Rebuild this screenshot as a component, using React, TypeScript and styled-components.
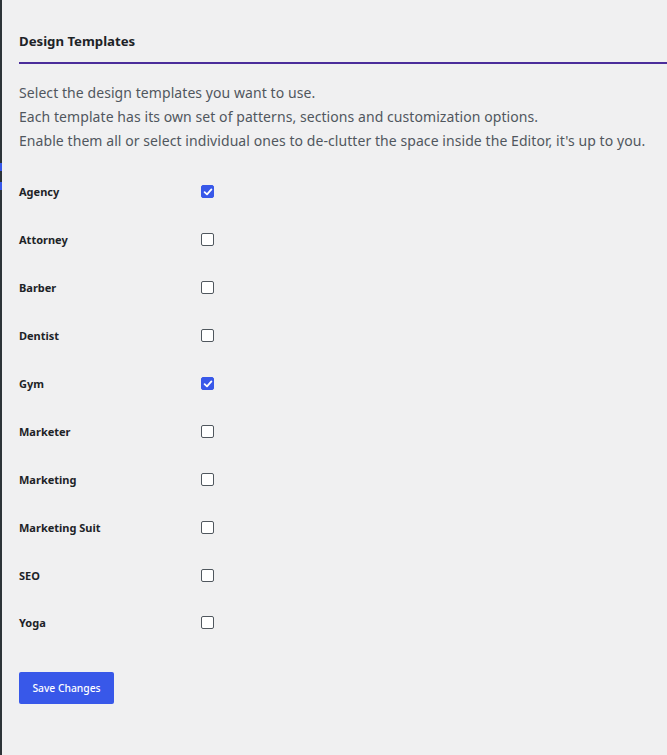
import React, { useState } from "react";
import styled, { createGlobalStyle } from "styled-components";

const Global = createGlobalStyle`
  html, body { margin: 0; padding: 0; background: #f0f0f1; }
  body { font-family: "Noto Sans", "Open Sans", sans-serif; color: #1d2327; }
`;

const Page = styled.div`
  position: relative;
  min-height: 755px;
  box-sizing: border-box;
  border-left: 2px solid #2c3338;
  padding: 0 0 40px 17px;
`;

const MenuMark = styled.span<{ $top: number }>`
  position: absolute;
  left: -2px;
  top: ${(p) => p.$top}px;
  width: 2px;
  height: 8px;
  background: #3858e9;
`;

const Header = styled.div`
  padding-top: 32px;
  height: 30px;
  border-bottom: 2px solid #4b2d9b;
`;

const Title = styled.h2`
  margin: 0;
  font-size: 13.2px;
  line-height: 18px;
  font-weight: 700;
  color: #1d2327;
`;

const Description = styled.div`
  margin-top: 17px;
  font-size: 14px;
  line-height: 24px;
  color: #50575e;
  letter-spacing: 0.07px;
  white-space: nowrap;
`;

const List = styled.div`
  margin-top: 15px;
  display: flex;
  flex-direction: column;
`;

const Row = styled.label`
  display: grid;
  grid-template-columns: 182px 13px;
  align-items: center;
  height: 47.9px;
  cursor: pointer;
`;

const Label = styled.span`
  font-size: 11px;
  font-weight: 700;
  color: #1d2327;
`;

const Box = styled.span<{ $checked: boolean }>`
  width: 13px;
  height: 13px;
  box-sizing: border-box;
  border-radius: 2px;
  border: 1px solid ${(p) => (p.$checked ? "#3858e9" : "#50575e")};
  background: ${(p) => (p.$checked ? "#3858e9" : "#fff")};
  display: flex;
  align-items: center;
  justify-content: center;
`;

const HiddenInput = styled.input`
  display: none;
`;

const Button = styled.button`
  margin-top: 25px;
  width: 95px;
  height: 32px;
  border: none;
  border-radius: 2px;
  background: #3858e9;
  color: #fff;
  font-family: inherit;
  font-size: 10.3px;
  font-weight: 500;
  cursor: pointer;
`;

const templates = [
  { name: "Agency", on: true },
  { name: "Attorney", on: false },
  { name: "Barber", on: false },
  { name: "Dentist", on: false },
  { name: "Gym", on: true },
  { name: "Marketer", on: false },
  { name: "Marketing", on: false },
  { name: "Marketing Suit", on: false },
  { name: "SEO", on: false },
  { name: "Yoga", on: false },
];

export default function App() {
  const [state, setState] = useState(templates.map((t) => t.on));
  return (
    <>
      <Global />
      <Page>
        <MenuMark $top={163} />
        <MenuMark $top={182} />
        <Header>
          <Title>Design Templates</Title>
        </Header>
        <Description>
          <div>Select the design templates you want to use.</div>
          <div>Each template has its own set of patterns, sections and customization options.</div>
          <div>
            Enable them all or select individual ones to de-clutter the space inside the Editor, it's up to you.
          </div>
        </Description>
        <List>
          {templates.map((t, i) => (
            <Row key={t.name}>
              <Label>{t.name}</Label>
              <HiddenInput
                type="checkbox"
                checked={state[i]}
                onChange={() => setState((s) => s.map((v, j) => (j === i ? !v : v)))}
              />
              <Box $checked={state[i]}>
                {state[i] && (
                  <svg width="10" height="10" viewBox="0 0 10 10">
                    <path d="M1.6 5.2 L4 7.4 L8.4 2.4" fill="none" stroke="#fff" strokeWidth="1.8" strokeLinecap="round" strokeLinejoin="round" />
                  </svg>
                )}
              </Box>
            </Row>
          ))}
        </List>
        <Button>Save Changes</Button>
      </Page>
    </>
  );
}
